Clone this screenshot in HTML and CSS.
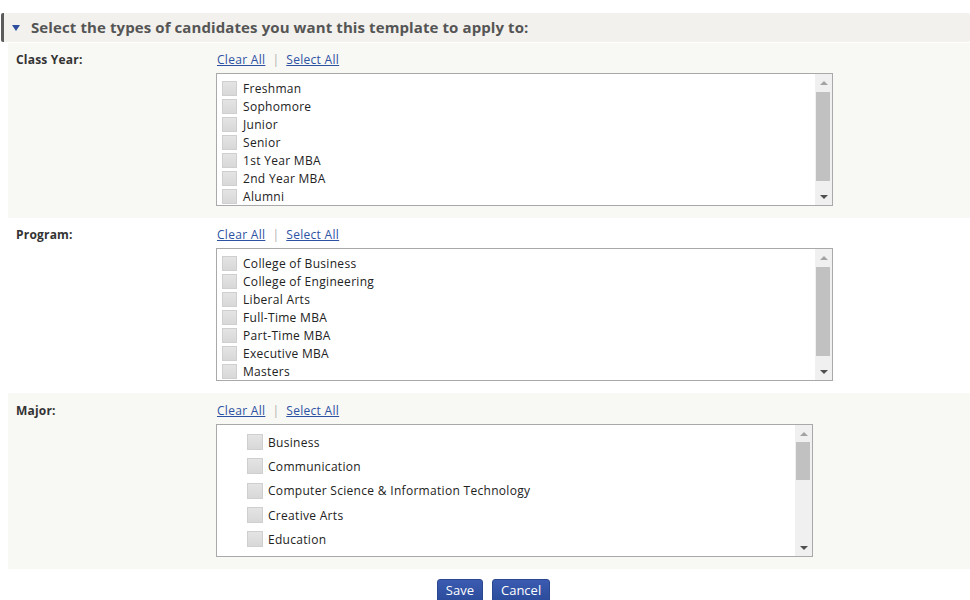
FILE: index.html
```html
<!DOCTYPE html>
<html>
<head>
    <title>Template Candidates</title>
    <meta charset="UTF-8">
    <link rel="stylesheet" href="styles.css">
</head>
<body>
    <div class="header">
        <span class="caret"></span>
        <h2>Select the types of candidates you want this template to apply to:</h2>
    </div>

    <div class="section shaded">
        <div class="label">Class Year:</div>
        <div class="field">
            <div class="links"><a href="#">Clear All</a><span class="sep">|</span><a href="#">Select All</a></div>
            <div class="listbox">
                <ul class="items">
                    <li><span class="check"></span>Freshman</li>
                    <li><span class="check"></span>Sophomore</li>
                    <li><span class="check"></span>Junior</li>
                    <li><span class="check"></span>Senior</li>
                    <li><span class="check"></span>1st Year MBA</li>
                    <li><span class="check"></span>2nd Year MBA</li>
                    <li><span class="check"></span>Alumni</li>
                </ul>
                <div class="scrollbar">
                    <div class="arrow up"></div>
                    <div class="track"><div class="thumb tall"></div></div>
                    <div class="arrow down"></div>
                </div>
            </div>
        </div>
    </div>

    <div class="section">
        <div class="label">Program:</div>
        <div class="field">
            <div class="links"><a href="#">Clear All</a><span class="sep">|</span><a href="#">Select All</a></div>
            <div class="listbox">
                <ul class="items">
                    <li><span class="check"></span>College of Business</li>
                    <li><span class="check"></span>College of Engineering</li>
                    <li><span class="check"></span>Liberal Arts</li>
                    <li><span class="check"></span>Full-Time MBA</li>
                    <li><span class="check"></span>Part-Time MBA</li>
                    <li><span class="check"></span>Executive MBA</li>
                    <li><span class="check"></span>Masters</li>
                </ul>
                <div class="scrollbar">
                    <div class="arrow up"></div>
                    <div class="track"><div class="thumb tall"></div></div>
                    <div class="arrow down"></div>
                </div>
            </div>
        </div>
    </div>

    <div class="section shaded last">
        <div class="label">Major:</div>
        <div class="field">
            <div class="links"><a href="#">Clear All</a><span class="sep">|</span><a href="#">Select All</a></div>
            <div class="listbox narrow">
                <ul class="items wide">
                    <li><span class="check"></span>Business</li>
                    <li><span class="check"></span>Communication</li>
                    <li><span class="check"></span>Computer Science &amp; Information Technology</li>
                    <li><span class="check"></span>Creative Arts</li>
                    <li><span class="check"></span>Education</li>
                    <li><span class="check"></span></li>
                </ul>
                <div class="scrollbar">
                    <div class="arrow up"></div>
                    <div class="track"><div class="thumb short"></div></div>
                    <div class="arrow down"></div>
                </div>
            </div>
        </div>
    </div>

    <div class="actions">
        <button>Save</button>
        <button>Cancel</button>
    </div>
</body>
</html>
```

FILE: styles.css
```css
body {
    margin: 0;
    background: #fff;
    font-family: "Open Sans", "DejaVu Sans", sans-serif;
    font-size: 12px;
    color: #222;
}
.header {
    margin: 13px 0 1px 1px;
    height: 29px;
    display: flex;
    align-items: center;
    background: #f2f1ed;
    border-left: 3px solid #5c5c5c;
    border-radius: 2px;
}
.caret {
    width: 0;
    height: 0;
    margin: 0 10px 0 8px;
    border-left: 4px solid transparent;
    border-right: 4px solid transparent;
    border-top: 6px solid #2d4f9c;
}
.header h2 {
    margin: 0 0 2px 1px;
    font-size: 15px;
    font-weight: bold;
    color: #555;
    letter-spacing: 0.1px;
}
.section {
    display: flex;
    margin-left: 8px;
    padding: 8px 0 12px 8px;
    height: 155px;
}
.section.last {
    padding-top: 9px;
}
.shaded {
    background: #f8f8f4;
}
.label {
    width: 200px;
    font-weight: bold;
    color: #333;
    line-height: 16px;
    letter-spacing: 0.2px;
    padding-top: 1px;
}
.field {
    width: 617px;
}
.links {
    line-height: 16px;
    margin: 1px 0 5px 1px;
    letter-spacing: 0.3px;
}
.links a {
    color: #2e52a3;
}
.sep {
    color: #b0b0b0;
    margin: 0 7px;
}
.listbox {
    display: flex;
    height: 131px;
    border: 1px solid #a9a9a9;
    background: #fff;
}
.listbox.narrow {
    width: 595px;
}
.items {
    flex: 1;
    margin: 0;
    padding: 5px 0 0 5px;
    list-style: none;
    overflow: hidden;
    letter-spacing: 0.3px;
}
.items li {
    display: flex;
    align-items: center;
    height: 18px;
    white-space: nowrap;
}
.items.wide {
    padding: 5px 0 0 30px;
}
.items.wide li {
    height: 24.3px;
}
.check {
    width: 13px;
    height: 13px;
    margin-right: 6px;
    border: 1px solid #cfcfcf;
    background: linear-gradient(#e4e4e4, #d8d8d8);
}
.wide .check {
    width: 14px;
    height: 14px;
    margin-right: 5px;
}
.scrollbar {
    width: 17px;
    display: flex;
    flex-direction: column;
    background: #f0f0f0;
}
.arrow {
    height: 17px;
    display: flex;
    align-items: center;
    justify-content: center;
}
.arrow::after {
    content: "";
    border-left: 4px solid transparent;
    border-right: 4px solid transparent;
}
.arrow.up::after {
    border-bottom: 4px solid #a3a3a3;
}
.arrow.down::after {
    border-top: 4px solid #505050;
}
.track {
    flex: 1;
}
.thumb {
    margin: 1px 2px 0 1px;
    background: #c1c1c1;
}
.thumb.tall {
    height: 89px;
}
.thumb.short {
    margin-top: 0;
    height: 38px;
}
.actions {
    display: flex;
    justify-content: center;
    gap: 9px;
    padding: 10px 0 0 17px;
}
.actions button {
    height: 22px;
    padding: 0 8px;
    border: 1px solid #2a4790;
    border-radius: 3px 3px 0 0;
    background: linear-gradient(#3a5bb0, #2c4c9c);
    color: #fff;
    font-family: "Open Sans", sans-serif;
    font-size: 13px;
    line-height: 18px;
}
```
